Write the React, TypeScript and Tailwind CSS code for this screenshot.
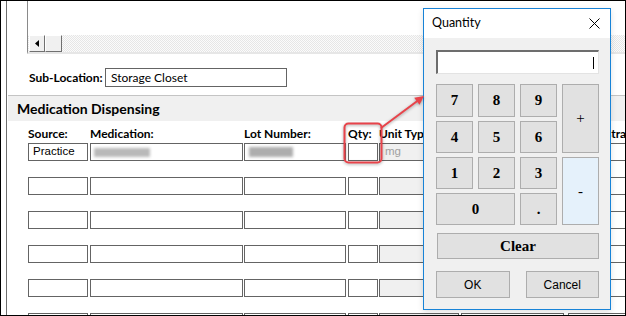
import React from "react";

type Col = { label: string; cls: string; gray?: boolean };

// left edges in the picture: 28, 90, 244, 348, 379, 461, 566
const cols: Col[] = [
  { label: "Source:", cls: "ml-[21px] w-[60px]" },
  { label: "Medication:", cls: "ml-[2px] w-[153px]" },
  { label: "Lot Number:", cls: "ml-[1px] w-[102px]" },
  { label: "Qty:", cls: "ml-[2px] w-[30px]" },
  { label: "Unit Type:", cls: "ml-[1px] w-[80px]", gray: true },
  { label: "", cls: "ml-[2px] w-[103px]" },
  { label: "Administration:", cls: "ml-[4px] w-[120px]" },
];

const Box: React.FC<{ col: Col; children?: React.ReactNode }> = ({ col, children }) => (
  <div
    className={`${col.cls} shrink-0 h-[18px] border border-[#646464] flex items-center ${
      col.gray ? "bg-[#f0f0f0]" : "bg-white"
    }`}
  >
    {children}
  </div>
);

const Key: React.FC<{ label: string; className?: string }> = ({ label, className = "" }) => (
  <div
    className={`flex items-center justify-center border border-[#adadad] bg-[#e1e1e1] font-['Liberation_Serif',serif] font-bold text-[15px] text-black ${className}`}
  >
    {label}
  </div>
);

const App: React.FC = () => {
  return (
    <div className="relative w-[626px] h-[316px] overflow-hidden bg-white border border-black flex font-['Lato',sans-serif] text-black">
      <div className="w-[5px] shrink-0" />
      <div className="w-px shrink-0 bg-[#6e6e6e]" />

      <div className="flex-1 flex flex-col min-w-0">
        {/* list box with horizontal scrollbar */}
        <div className="ml-[20px] h-[53px] shrink-0 flex flex-col border-l border-[#8a8a8a] border-b-2 border-b-[#e6e6e6]">
          <div className="flex-1" />
          <div className="h-[17px] flex bg-[repeating-conic-gradient(#e6e6e6_0_25%,#fbfbfb_0_50%)] bg-[length:2px_2px]">
            <div className="ml-px w-[16px] h-[17px] bg-[#f0f0f0] border border-t-white border-l-white border-r-[#707070] border-b-[#707070] flex items-center justify-center">
              <svg width="4" height="7" viewBox="0 0 4 7">
                <path d="M4 0 L0 3.5 L4 7 Z" fill="#000" />
              </svg>
            </div>
            <div className="w-[17px] h-[17px] bg-[#f0f0f0] border border-t-white border-l-white border-r-[#707070] border-b-[#707070]" />
          </div>
        </div>

        {/* sub-location */}
        <div className="mt-[14px] h-[19px] shrink-0 flex items-center ml-[22px]">
          <div className="w-[76px] text-[12px] font-bold leading-none whitespace-nowrap">Sub-Location:</div>
          <div className="w-[182px] h-[19px] border border-[#646464] flex items-center pl-[5px] text-[12px]">
            Storage Closet
          </div>
        </div>

        {/* section header */}
        <div className="mt-[8px] ml-px h-[26px] shrink-0 bg-[#f0f0f0] border-t border-[#c4c4c4] flex items-center pl-[9px] text-[14px] font-bold">
          Medication Dispensing
        </div>

        {/* column labels */}
        <div className="h-[22px] shrink-0 flex items-end pb-[3px]">
          {cols.map((c, i) => (
            <div key={i} className={`${c.cls} shrink-0 text-[12px] font-bold leading-[13px] whitespace-nowrap`}>
              {c.label}
            </div>
          ))}
        </div>

        {/* rows */}
        <div className="flex flex-col gap-[16px] shrink-0">
          <div className="flex">
            <Box col={cols[0]}>
              <span className="pl-[4px] font-['Liberation_Sans',sans-serif] text-[11.5px]">Practice</span>
            </Box>
            <Box col={cols[1]}>
              <div className="ml-[3px] w-[56px] h-[9px] bg-[#b9b9b9] blur-[1.5px]" />
            </Box>
            <Box col={cols[2]}>
              <div className="ml-[4px] w-[44px] h-[10px] bg-[#adadad] blur-[1.5px]" />
            </Box>
            <Box col={cols[3]} />
            <Box col={cols[4]}>
              <span className="pl-[5px] font-['Liberation_Sans',sans-serif] text-[11.5px] text-[#a0a0a0]">mg</span>
            </Box>
            <Box col={cols[5]} />
            <Box col={cols[6]} />
          </div>
          {[0, 1, 2, 3, 4].map((r) => (
            <div key={r} className="flex">
              {cols.map((c, i) => (
                <Box key={i} col={c} />
              ))}
            </div>
          ))}
        </div>
      </div>

      {/* Quantity dialog */}
      <div className="absolute left-[422px] top-[7px] w-[188px] h-[302px] border border-[#1883d7] bg-[#f0f0f0] shadow-[0_2px_6px_rgba(0,0,0,0.12)] flex flex-col">
        <div className="h-[29px] shrink-0 bg-white flex items-center justify-between pl-[8px] pr-[10px]">
          <span className="text-[12.5px]">Quantity</span>
          <svg width="11" height="11" viewBox="0 0 11 11">
            <path d="M0.5 0.5 L10.5 10.5 M10.5 0.5 L0.5 10.5" stroke="#000" strokeWidth="1" />
          </svg>
        </div>

        <div className="ml-[12px] w-[163px] flex flex-col">
          <div className="mt-[12px] h-[24px] bg-white border-t-2 border-l-2 border-[#6d6d6d] border-r border-b border-r-[#e3e3e3] border-b-[#e3e3e3] flex items-center justify-end pr-[4px]">
            <div className="w-px h-[12px] bg-black" />
          </div>

          <div className="mt-[10px] grid grid-cols-[37px_37px_37px_37px] grid-rows-[33px_32px_32px_32px] gap-x-[5px] gap-y-[4px]">
            <Key label="7" />
            <Key label="8" />
            <Key label="9" />
            <Key label="+" className="row-span-2 font-normal text-[14px]" />
            <Key label="4" />
            <Key label="5" />
            <Key label="6" />
            <Key label="1" />
            <Key label="2" />
            <Key label="3" />
            <Key label="-" className="row-span-2 bg-[#e5f1fb] border-[#0078d7] font-normal text-[14px]" />
            <Key label="0" className="col-span-2" />
            <Key label="." />
          </div>

          <Key label="Clear" className="mt-[8px] ml-px w-[162px] h-[26px]" />

          <div className="mt-[12px] flex gap-[16px] font-['Liberation_Sans',sans-serif] text-[12px]">
            <div className="w-[74px] h-[27px] border border-[#adadad] bg-[#e1e1e1] flex items-center justify-center">OK</div>
            <div className="w-[74px] h-[27px] border border-[#adadad] bg-[#e1e1e1] flex items-center justify-center">Cancel</div>
          </div>
        </div>
      </div>

      {/* red callout */}
      <svg
        className="absolute -left-px -top-px pointer-events-none drop-shadow-[0_1px_1.5px_rgba(0,0,0,0.35)]"
        width="626"
        height="316"
        viewBox="0 0 626 316"
      >
        <rect x="344.5" y="123.5" width="37" height="39" rx="4" fill="none" stroke="#e8434a" strokeWidth="2" />
        <line x1="381" y1="128" x2="418" y2="100.5" stroke="#e8434a" strokeWidth="2" />
        <polygon points="424,96 419.5,104.8 414.2,97.8" fill="#e8434a" />
      </svg>
    </div>
  );
};

export default App;
